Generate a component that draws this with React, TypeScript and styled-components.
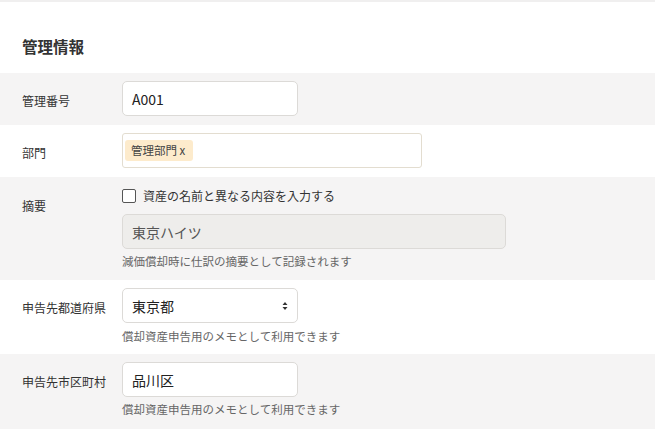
import React from "react";
import styled, { createGlobalStyle } from "styled-components";

const Global = createGlobalStyle`
  body { margin: 0; background: #fff; font-family: "Noto Sans CJK JP", "Noto Sans", sans-serif; color: #333; }
`;

const Page = styled.div`
  border-top: 2px solid #f0efef;
`;
const Heading = styled.h2`
  margin: 0;
  padding: 33px 22px 16px;
  font-size: 15.5px;
  line-height: 22px;
  font-weight: 700;
  color: #333;
`;
const Row = styled.div<{ $gray?: boolean; $pb?: number }>`
  display: grid;
  grid-template-columns: 100px 1fr;
  padding: 8px 0 ${(p) => p.$pb ?? 9}px 22px;
  background: ${(p) => (p.$gray ? "#f5f4f4" : "#fff")};
`;
const Label = styled.div<{ $top?: number }>`
  font-size: 12px;
  line-height: 18px;
  padding-top: ${(p) => p.$top ?? 11}px;
  color: #333;
`;
const Field = styled.div`
  display: flex;
  flex-direction: column;
  align-items: flex-start;
`;
const Input = styled.div<{ $w: number; $disabled?: boolean }>`
  box-sizing: border-box;
  width: ${(p) => p.$w}px;
  height: 35px;
  border: 1px solid #dcdad7;
  border-radius: 5px;
  background: ${(p) => (p.$disabled ? "#eeedeb" : "#fff")};
  color: ${(p) => (p.$disabled ? "#555" : "#222")};
  font-size: 14px;
  display: flex;
  align-items: center;
  padding: 0 9px;
  justify-content: space-between;
`;
const TagBox = styled.div`
  box-sizing: border-box;
  width: 300px;
  height: 35px;
  border: 1px solid #e3ddd0;
  border-radius: 3px;
  padding: 2px;
`;
const Tag = styled.span`
  display: inline-block;
  background: #fdebcc;
  border-radius: 3px;
  font-size: 11.5px;
  line-height: 21px;
  padding: 0 8px 0 6px;
  color: #444;
`;
const CheckRow = styled.label`
  display: flex;
  align-items: center;
  gap: 7px;
  font-size: 12px;
  line-height: 18px;
  margin: 2px 0 9px;
`;
const Box = styled.span`
  width: 12px;
  height: 12px;
  border: 1px solid #555;
  border-radius: 2px;
  background: #fff;
`;
const Help = styled.div<{ $mt?: number }>`
  font-size: 11.5px;
  line-height: 18px;
  color: #666;
  margin-top: ${(p) => p.$mt ?? 3}px;
`;

export default function App() {
  return (
    <Page>
      <Global />
      <Heading>管理情報</Heading>
      <Row $gray>
        <Label>管理番号</Label>
        <Field><Input $w={176}>A001</Input></Field>
      </Row>
      <Row>
        <Label>部門</Label>
        <Field><TagBox><Tag>管理部門 x</Tag></TagBox></Field>
      </Row>
      <Row $gray $pb={10}>
        <Label $top={12}>摘要</Label>
        <Field>
          <CheckRow><Box />資産の名前と異なる内容を入力する</CheckRow>
          <Input $w={384} $disabled>東京ハイツ</Input>
          <Help>減価償却時に仕訳の摘要として記録されます</Help>
        </Field>
      </Row>
      <Row>
        <Label>申告先都道府県</Label>
        <Field>
          <Input $w={176}>
            東京都
            <svg width="6" height="10" viewBox="0 0 6 10"><path d="M3 1L5.5 4H0.5Z M3 9L5.5 6H0.5Z" fill="#333" /></svg>
          </Input>
          <Help $mt={4}>償却資産申告用のメモとして利用できます</Help>
        </Field>
      </Row>
      <Row $gray $pb={12}>
        <Label>申告先市区町村</Label>
        <Field>
          <Input $w={176}>品川区</Input>
          <Help>償却資産申告用のメモとして利用できます</Help>
        </Field>
      </Row>
    </Page>
  );
}
